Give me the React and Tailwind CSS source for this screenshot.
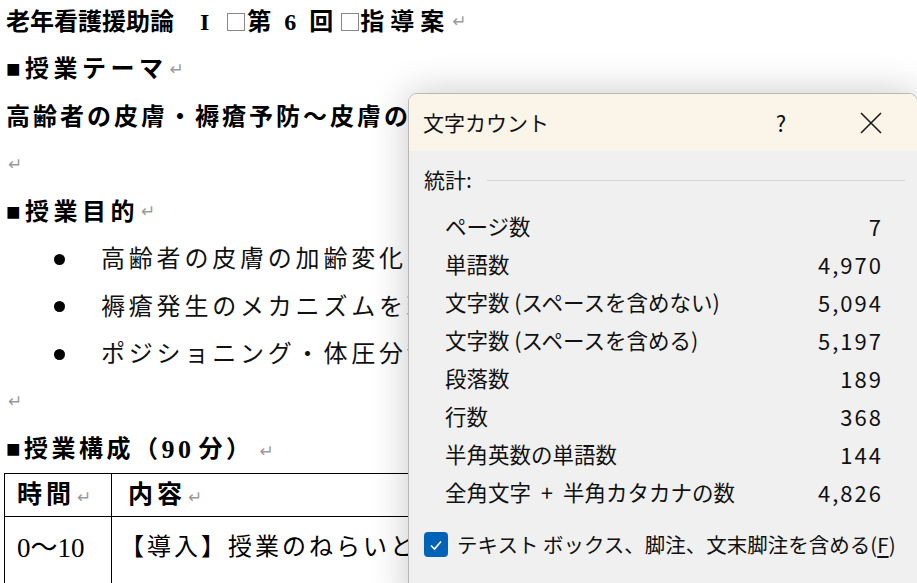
import React from "react";

const DOC_FONT = { fontFamily: '"Liberation Serif", "Noto Sans CJK JP", serif' };
const UI_FONT = { fontFamily: '"Noto Sans CJK JP", "Noto Sans", sans-serif' };

function Ret() {
  return (
    <span className="text-[#9a9a9a] text-[17px] font-normal tracking-normal ml-[2px]" style={{ fontFamily: '"DejaVu Sans", sans-serif' }}>
      ↵
    </span>
  );
}

function Box({ className = "" }) {
  return <span className={`inline-block shrink-0 w-[18px] h-[18px] border border-[#888] ${className}`} />;
}

function Line({ children, className = "" }) {
  return (
    <div className={`h-[47.5px] flex items-center whitespace-nowrap ${className}`}>{children}</div>
  );
}

function Bullet({ children }) {
  return (
    <Line className="text-[24px] tracking-[3.8px] text-[#111]">
      <span className="w-[95px] flex pl-[48px]">
        <span className="w-[11px] h-[11px] rounded-full bg-black inline-block" />
      </span>
      {children}
    </Line>
  );
}

const rows = [
  ["ページ数", "7"],
  ["単語数", "4,970"],
  ["文字数\u00a0(スペースを含めない)", "5,094"],
  ["文字数\u00a0(スペースを含める)", "5,197"],
  ["段落数", "189"],
  ["行数", "368"],
  ["半角英数の単語数", "144"],
];

export default function App() {
  return (
    <div className="relative w-[917px] h-[583px] overflow-hidden bg-white">
      <div className="pl-[6px] mt-[-2px] text-black" style={DOC_FONT}>
        <Line className="text-[24px] font-bold">
          <span>老年看護援助論</span>
          <span className="ml-[26px]">I</span>
          <Box className="ml-[18px]" />
          <span className="ml-[2px]">第</span>
          <span className="ml-[13px]">6</span>
          <span className="ml-[13px]">回</span>
          <Box className="ml-[8px]" />
          <span className="ml-[1px] tracking-[6px]">指導案</span>
          <Ret />
        </Line>
        <Line className="text-[24px] font-bold tracking-[4.5px]">
          ■授業テーマ<Ret />
        </Line>
        <Line className="text-[24px] font-bold tracking-[3px]">
          高齢者の皮膚・褥瘡予防～皮膚の観察とケア～<Ret />
        </Line>
        <Line>
          <Ret />
        </Line>
        <Line className="text-[24px] font-bold tracking-[4.5px]">
          ■授業目的<Ret />
        </Line>
        <Bullet>高齢者の皮膚の加齢変化を理解する</Bullet>
        <Bullet>褥瘡発生のメカニズムを理解する</Bullet>
        <Bullet>ポジショニング・体圧分散の方法を学ぶ</Bullet>
        <Line>
          <Ret />
        </Line>
        <Line className="text-[24px] font-bold tracking-[3.5px]">
          ■授業構成（<span className="text-[26px]">90</span>
          <span className="ml-[4px]">分）</span>
          <span className="ml-[4px]"><Ret /></span>
        </Line>
        <table className="border-collapse ml-[-2px] w-[880px] text-[25px]">
          <tbody>
            <tr className="h-[43px]">
              <td className="border border-black w-[107px] pl-[12px] font-bold whitespace-nowrap tracking-[4px]">
                時間<Ret />
              </td>
              <td className="border border-black pl-[16px] font-bold whitespace-nowrap tracking-[4px]">
                内容<Ret />
              </td>
            </tr>
            <tr className="h-[80px] align-top">
              <td className="border border-black pl-[12px] pt-[11px] whitespace-nowrap text-[27px]">0～10</td>
              <td className="border border-black pl-[8px] pt-[12px] tracking-[3px] text-[24px] whitespace-nowrap">
                【導入】授業のねらいと流れの説明
              </td>
            </tr>
          </tbody>
        </table>
      </div>

      {/* Word count dialog */}
      <div
        className="absolute left-[408px] top-[93px] w-[510px] h-[520px] rounded-[9px] border border-[#b8b8b8] bg-[#f0f0f0] overflow-hidden shadow-[0_0_38px_rgba(0,0,0,0.22)] text-[#111]"
        style={UI_FONT}
      >
        <div className="h-[57px] bg-[#faf4e9] flex items-center pl-[14px] pr-[26px]">
          <span className="text-[21px] flex-1">文字カウント</span>
          <span className="w-[40px] text-center text-[22px]">?</span>
          <span className="w-[40px] ml-[50px] flex justify-center">
            <svg width="24" height="24" viewBox="0 0 24 24" fill="none" stroke="#1a1a1a" strokeWidth="1.6">
              <path d="M2 2 L22 22 M22 2 L2 22" />
            </svg>
          </span>
        </div>
        <div className="pt-[12px] pl-[15px] pr-[12px] flex items-center h-[46px]">
          <span className="text-[21px]">統計:</span>
          <span className="flex-1 h-px bg-[#d6d6d6] ml-[15px]" />
        </div>
        <div className="mt-[10px] pl-[36px] pr-[34px]">
          {rows.map(([k, v]) => (
            <div key={k} className="h-[38px] flex items-center justify-between text-[21.5px] whitespace-nowrap">
              <span>{k}</span>
              <span className="tracking-[2px] text-[22px]">{v}</span>
            </div>
          ))}
          <div className="h-[38px] flex items-center justify-between text-[21.5px] whitespace-nowrap">
            <span>
              全角文字<span className="mx-[10px]">+</span>半角カタカナの数
            </span>
            <span className="tracking-[2px] text-[22px]">4,826</span>
          </div>
        </div>
        <div className="mt-[20px] pl-[15px] flex items-center h-[27px]">
          <span className="w-[24px] h-[25px] rounded-[4px] bg-[#0063b8] flex items-center justify-center">
            <svg width="14" height="14" viewBox="0 0 14 14" fill="none" stroke="white" strokeWidth="1.6">
              <path d="M2 7.5 L5.5 11 L12 3.5" />
            </svg>
          </span>
          <span className="ml-[9px] text-[20.5px] whitespace-nowrap">
            テキスト ボックス、脚注、文末脚注を含める(<span className="underline underline-offset-[3px]">F</span>)
          </span>
        </div>
      </div>
    </div>
  );
}
